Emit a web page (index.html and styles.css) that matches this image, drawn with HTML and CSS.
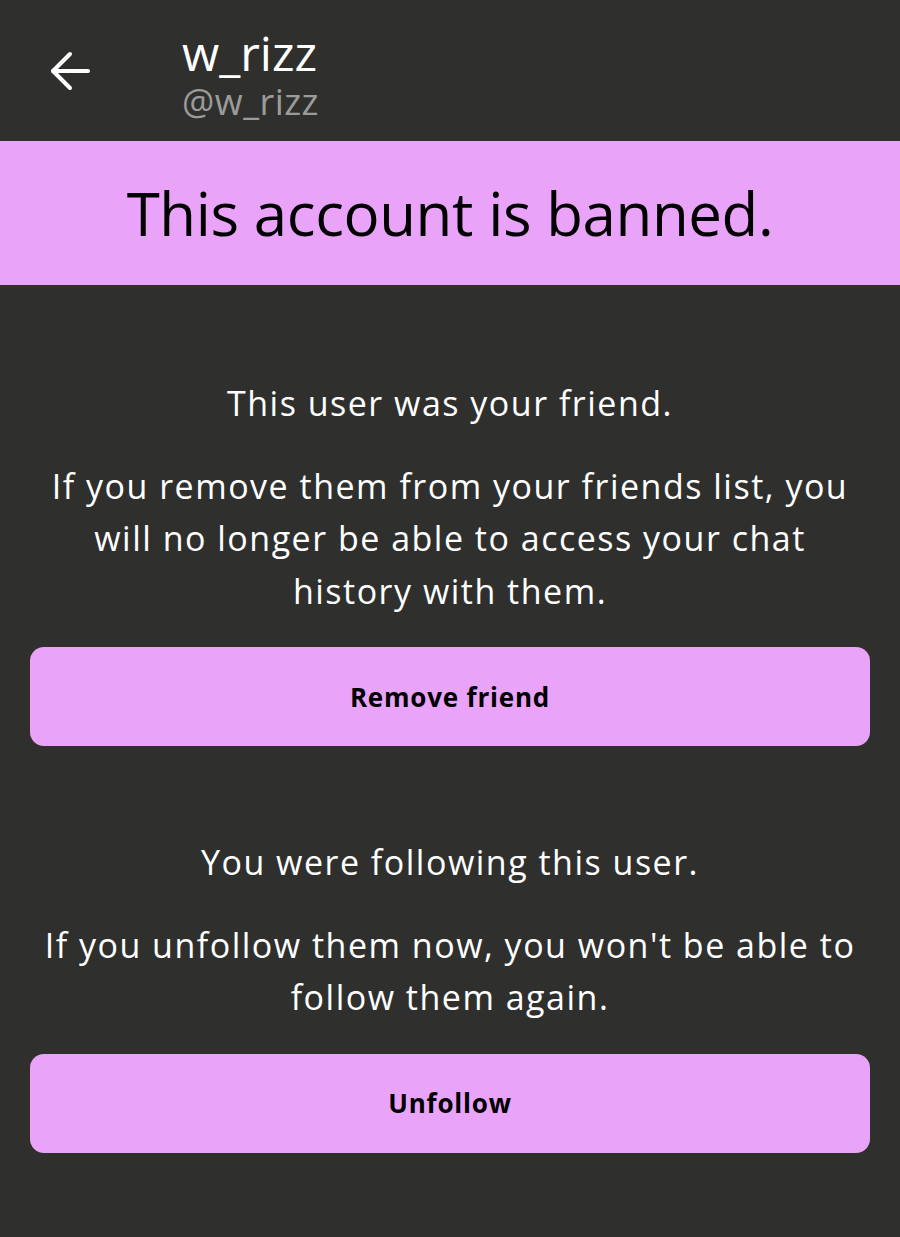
FILE: index.html
```html
<!DOCTYPE html>
<html lang="en">
<head>
  <meta charset="UTF-8" />
  <meta name="viewport" content="width=device-width, initial-scale=1" />
  <title>w_rizz</title>
  <link rel="stylesheet" href="styles.css">
</head>
<body>
  <header class="topbar">
    <button class="back" aria-label="Back">
      <svg width="40" height="40" viewBox="0 0 40 40" fill="none" stroke="#fff" stroke-width="4" stroke-linecap="round" stroke-linejoin="round">
        <path d="M38 20H3"/>
        <path d="M20 3L3 20L20 37"/>
      </svg>
    </button>
    <div class="names">
      <div class="display-name">w_rizz</div>
      <div class="handle">@w_rizz</div>
    </div>
  </header>

  <div class="banner">This account is banned.</div>

  <main class="content">
    <section class="block">
      <p class="lead">This user was your friend.</p>
      <p>If you remove them from your friends list, you will no longer be able to access your chat history with them.</p>
      <button class="action">Remove friend</button>
    </section>

    <section class="block">
      <p class="lead">You were following this user.</p>
      <p>If you unfollow them now, you won't be able to follow them again.</p>
      <button class="action">Unfollow</button>
    </section>
  </main>
</body>
</html>
```

FILE: styles.css
```css
body {
  margin: 0;
  background: #2f302e;
  color: #fff;
  font-family: 'Open Sans', 'Noto Sans', sans-serif;
}

.topbar {
  height: 141px;
  display: flex;
  align-items: center;
  padding-left: 50px;
  box-sizing: border-box;
}

.back {
  background: none;
  border: none;
  padding: 0;
  width: 40px;
  height: 40px;
  margin-right: 92px;
  cursor: pointer;
}

.back svg {
  display: block;
}

.names {
  display: flex;
  flex-direction: column;
  margin-top: 6px;
}

.display-name {
  font-size: 48px;
  line-height: 56px;
  color: #fff;
}

.handle {
  font-size: 36px;
  line-height: 42px;
  letter-spacing: 0.5px;
  color: #9b9b99;
}

.banner {
  background: #e9a3f8;
  color: #000;
  height: 144px;
  display: flex;
  align-items: center;
  justify-content: center;
  font-size: 60px;
  letter-spacing: -0.4px;
}

.content {
  padding: 0 30px;
}

.block {
  text-align: center;
}

.block:first-child {
  padding-top: 92px;
}

.block + .block {
  padding-top: 90px;
}

.block p {
  margin: 0;
  font-size: 34px;
  line-height: 52.5px;
  letter-spacing: 1.5px;
}

.block .lead {
  margin-bottom: 30px;
}

.action {
  display: block;
  width: 100%;
  height: 99px;
  margin-top: 30px;
  border: none;
  border-radius: 14px;
  background: #e9a3f8;
  color: #000;
  font-family: inherit;
  font-size: 26px;
  font-weight: 700;
  letter-spacing: 0.8px;
  cursor: pointer;
}
```
